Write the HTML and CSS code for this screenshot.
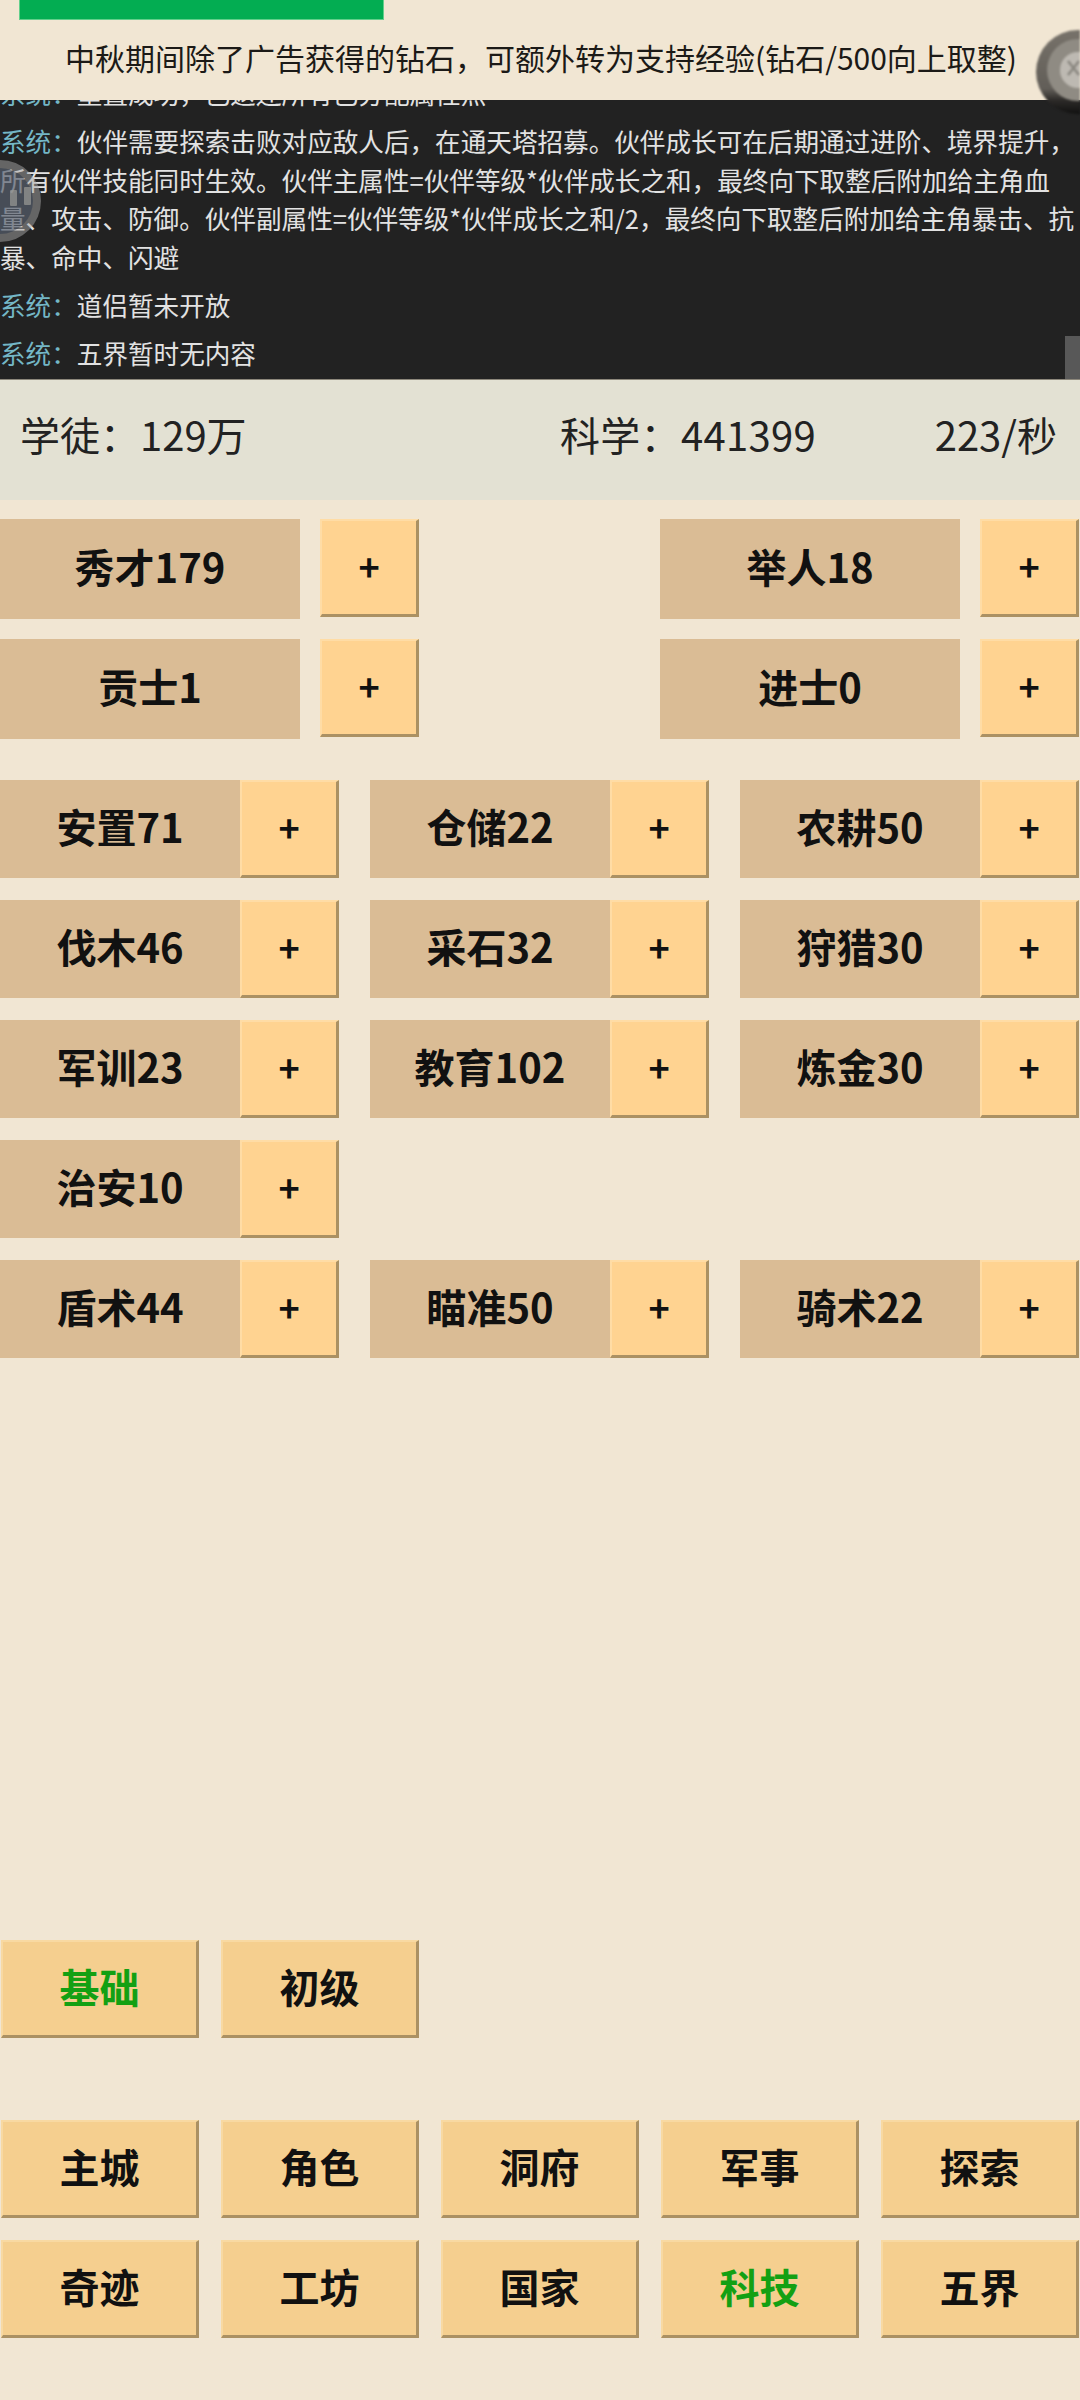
FILE: index.html
```html
<!DOCTYPE html>
<html lang="zh-CN">
<head>
<meta charset="utf-8">
<title>科技</title>
<link rel="stylesheet" href="styles.css">
</head>
<body>
<div class="page">
  <header class="notice">
    <div class="progress"></div>
    <p class="notice-text">中秋期间除了广告获得的钻石&#xFF0C;可额外转为支持经验(钻石/500向上取整)</p>
  </header>

  <section class="log">
    <p class="log-entry"><span class="sys">系统&#xFF1A;</span>重置成功&#xFF0C;已返还所有已分配属性点</p>
    <p class="log-entry"><span class="sys">系统&#xFF1A;</span>伙伴需要探索击败对应敌人后&#xFF0C;在通天塔招募。伙伴成长可在后期通过进阶、境界提升&#xFF0C;<br>所有伙伴技能同时生效。伙伴主属性=伙伴等级*伙伴成长之和&#xFF0C;最终向下取整后附加给主角血<br>量、攻击、防御。伙伴副属性=伙伴等级*伙伴成长之和/2&#xFF0C;最终向下取整后附加给主角暴击、抗<br>暴、命中、闪避</p>
    <p class="log-entry"><span class="sys">系统&#xFF1A;</span>道侣暂未开放</p>
    <p class="log-entry"><span class="sys">系统&#xFF1A;</span>五界暂时无内容</p>
    <div class="scroll-thumb"></div>
  </section>

  <section class="stats">
    <span class="stat-a">学徒&#xFF1A;129万</span>
    <span class="stat-b">科学&#xFF1A;441399</span>
    <span class="stat-c">223/秒</span>
  </section>

  <section class="degrees">
    <div class="pair wide"><div class="label">秀才179</div><button class="plus">+</button></div>
    <div class="pair wide"><div class="label">举人18</div><button class="plus">+</button></div>
    <div class="pair wide"><div class="label">贡士1</div><button class="plus">+</button></div>
    <div class="pair wide"><div class="label">进士0</div><button class="plus">+</button></div>
  </section>

  <section class="skills">
    <div class="pair"><div class="label">安置71</div><button class="plus">+</button></div>
    <div class="pair"><div class="label">仓储22</div><button class="plus">+</button></div>
    <div class="pair"><div class="label">农耕50</div><button class="plus">+</button></div>
    <div class="pair"><div class="label">伐木46</div><button class="plus">+</button></div>
    <div class="pair"><div class="label">采石32</div><button class="plus">+</button></div>
    <div class="pair"><div class="label">狩猎30</div><button class="plus">+</button></div>
    <div class="pair"><div class="label">军训23</div><button class="plus">+</button></div>
    <div class="pair"><div class="label">教育102</div><button class="plus">+</button></div>
    <div class="pair"><div class="label">炼金30</div><button class="plus">+</button></div>
    <div class="pair"><div class="label">治安10</div><button class="plus">+</button></div>
    <div class="pair empty"></div>
    <div class="pair empty"></div>
    <div class="pair"><div class="label">盾术44</div><button class="plus">+</button></div>
    <div class="pair"><div class="label">瞄准50</div><button class="plus">+</button></div>
    <div class="pair"><div class="label">骑术22</div><button class="plus">+</button></div>
  </section>

  <div class="spacer"></div>

  <nav class="tiers">
    <button class="nav-btn active">基础</button>
    <button class="nav-btn">初级</button>
  </nav>

  <nav class="main-nav">
    <button class="nav-btn">主城</button>
    <button class="nav-btn">角色</button>
    <button class="nav-btn">洞府</button>
    <button class="nav-btn">军事</button>
    <button class="nav-btn">探索</button>
    <button class="nav-btn">奇迹</button>
    <button class="nav-btn">工坊</button>
    <button class="nav-btn">国家</button>
    <button class="nav-btn active">科技</button>
    <button class="nav-btn">五界</button>
  </nav>

  <svg class="float-left" viewBox="0 0 42 84" width="42" height="84" aria-hidden="true">
    <circle class="fl-ring" cx="0" cy="42" r="41"/>
    <circle class="fl-core" cx="0" cy="42" r="33"/>
    <rect class="fl-bar" x="10" y="31" width="7" height="16" rx="1"/>
    <rect class="fl-bar" x="24" y="28" width="7" height="18" rx="1"/>
  </svg>

  <svg class="float-close" viewBox="0 0 44 88" width="44" height="88" aria-hidden="true">
    <defs>
      <linearGradient id="closeShade" x1="0" y1="0" x2="0" y2="1">
        <stop offset="0" stop-color="#77726a"/>
        <stop offset="0.7" stop-color="#625e58"/>
        <stop offset="0.84" stop-color="#2c2a28"/>
        <stop offset="1" stop-color="#111111"/>
      </linearGradient>
    </defs>
    <circle cx="42" cy="44" r="42" fill="url(#closeShade)"/>
    <circle cx="42" cy="42" r="31" fill="#8f8b83"/>
    <circle cx="42" cy="42" r="18" fill="#bdb9b2"/>
    <path class="close-x" d="M32 33 L43 47 M43 33 L32 47"/>
  </svg>
</div>
</body>
</html>
```

FILE: styles.css
```css
* {
  box-sizing: border-box;
}

html,
body {
  margin: 0;
  padding: 0;
}

body {
  background: #f1e6d3;
  font-family: "Noto Sans CJK SC", "Noto Sans", sans-serif;
  color: #111;
}

.page {
  position: relative;
  width: 1080px;
  height: 2400px;
  overflow: hidden;
  display: flex;
  flex-direction: column;
  background: #f1e6d3;
}

/* notice */
.notice {
  height: 100px;
  flex: none;
}

.progress {
  width: 365px;
  height: 20px;
  margin-left: 19px;
  background: #03ad52;
  border-right: 1px solid #62cf8b;
  border-bottom: 1px solid #62cf8b;
  border-left: 1px solid #62cf8b;
}

.notice-text {
  margin: 0;
  padding: 18px 0 0 65px;
  font-size: 30px;
  line-height: 38px;
  color: #1c1a17;
  white-space: nowrap;
}

/* log */
.log {
  position: relative;
  flex: none;
  height: 280px;
  padding-bottom: 7px;
  overflow: hidden;
  display: flex;
  flex-direction: column;
  justify-content: flex-end;
  background: #222222;
  border-bottom: 1px solid #8c877b;
  color: #e2e2e2;
  font-size: 25.6px;
  line-height: 38.4px;
}

.log-entry {
  flex: none;
  margin: 9.6px 0 0;
  white-space: nowrap;
}

.sys {
  color: #74b7c6;
}

.scroll-thumb {
  position: absolute;
  right: 0;
  bottom: 0;
  width: 15px;
  height: 43px;
  background: #585858;
}

/* stats */
.stats {
  flex: none;
  height: 120px;
  padding: 0 23px 12px 20px;
  display: flex;
  align-items: center;
  background: #e3e1d3;
  font-size: 40px;
  line-height: 56px;
  color: #222;
}

.stat-a {
  width: 540px;
}

.stat-b {
  flex: 1;
  letter-spacing: 0.3px;
}

/* pairs */
.degrees {
  flex: none;
  width: 1079px;
  margin-top: 19px;
  display: grid;
  grid-template-columns: 419px 419px;
  justify-content: space-between;
  row-gap: 20px;
}

.skills {
  flex: none;
  width: 1079px;
  margin-top: 41px;
  display: grid;
  grid-template-columns: repeat(3, 339px);
  column-gap: 31px;
  row-gap: 22px;
}

.pair {
  display: flex;
  height: 98px;
}

.pair.wide {
  height: 100px;
  gap: 20px;
}

.label {
  flex: 1;
  display: flex;
  align-items: center;
  justify-content: center;
  padding-bottom: 6px;
  background: #dabc95;
  font-size: 40px;
  font-weight: 700;
  color: #111;
}

.plus {
  flex: none;
  width: 99px;
  height: 98px;
  padding: 0 0 5px;
  background: #ffd391;
  border-style: solid;
  border-width: 2px 3px 3px 2px;
  border-color: #ffdca5 #ab9163 #ab9163 #ffdca5;
  font-family: inherit;
  font-size: 36px;
  font-weight: 700;
  color: #111;
}

.spacer {
  flex: 1;
}

/* nav */
.tiers,
.main-nav {
  flex: none;
  padding-left: 1px;
  display: grid;
  grid-template-columns: repeat(5, 198px);
  column-gap: 22px;
}

.main-nav {
  margin-top: 82px;
  margin-bottom: 62px;
  row-gap: 22px;
}

.nav-btn {
  height: 98px;
  padding: 0 0 5px;
  background: #f5cf8f;
  border-style: solid;
  border-width: 2px 3px 3px 2px;
  border-color: #f8d9a2 #ab9163 #ab9163 #f8d9a2;
  font-family: inherit;
  font-size: 40px;
  font-weight: 700;
  color: #111;
}

.nav-btn.active {
  color: #13a013;
}

/* floating overlays */
.float-left {
  position: absolute;
  left: 0;
  top: 159px;
}

.fl-ring {
  fill: #a8a8a8;
  fill-opacity: 0.5;
}

.fl-core {
  fill: #1b2b44;
  fill-opacity: 0.4;
}

.fl-bar {
  fill: #9a9a96;
  fill-opacity: 0.7;
}

.float-close {
  position: absolute;
  right: 0;
  top: 28px;
  filter: blur(1px);
}

.close-x {
  fill: none;
  stroke: #8a8780;
  stroke-width: 2.5;
}
```
